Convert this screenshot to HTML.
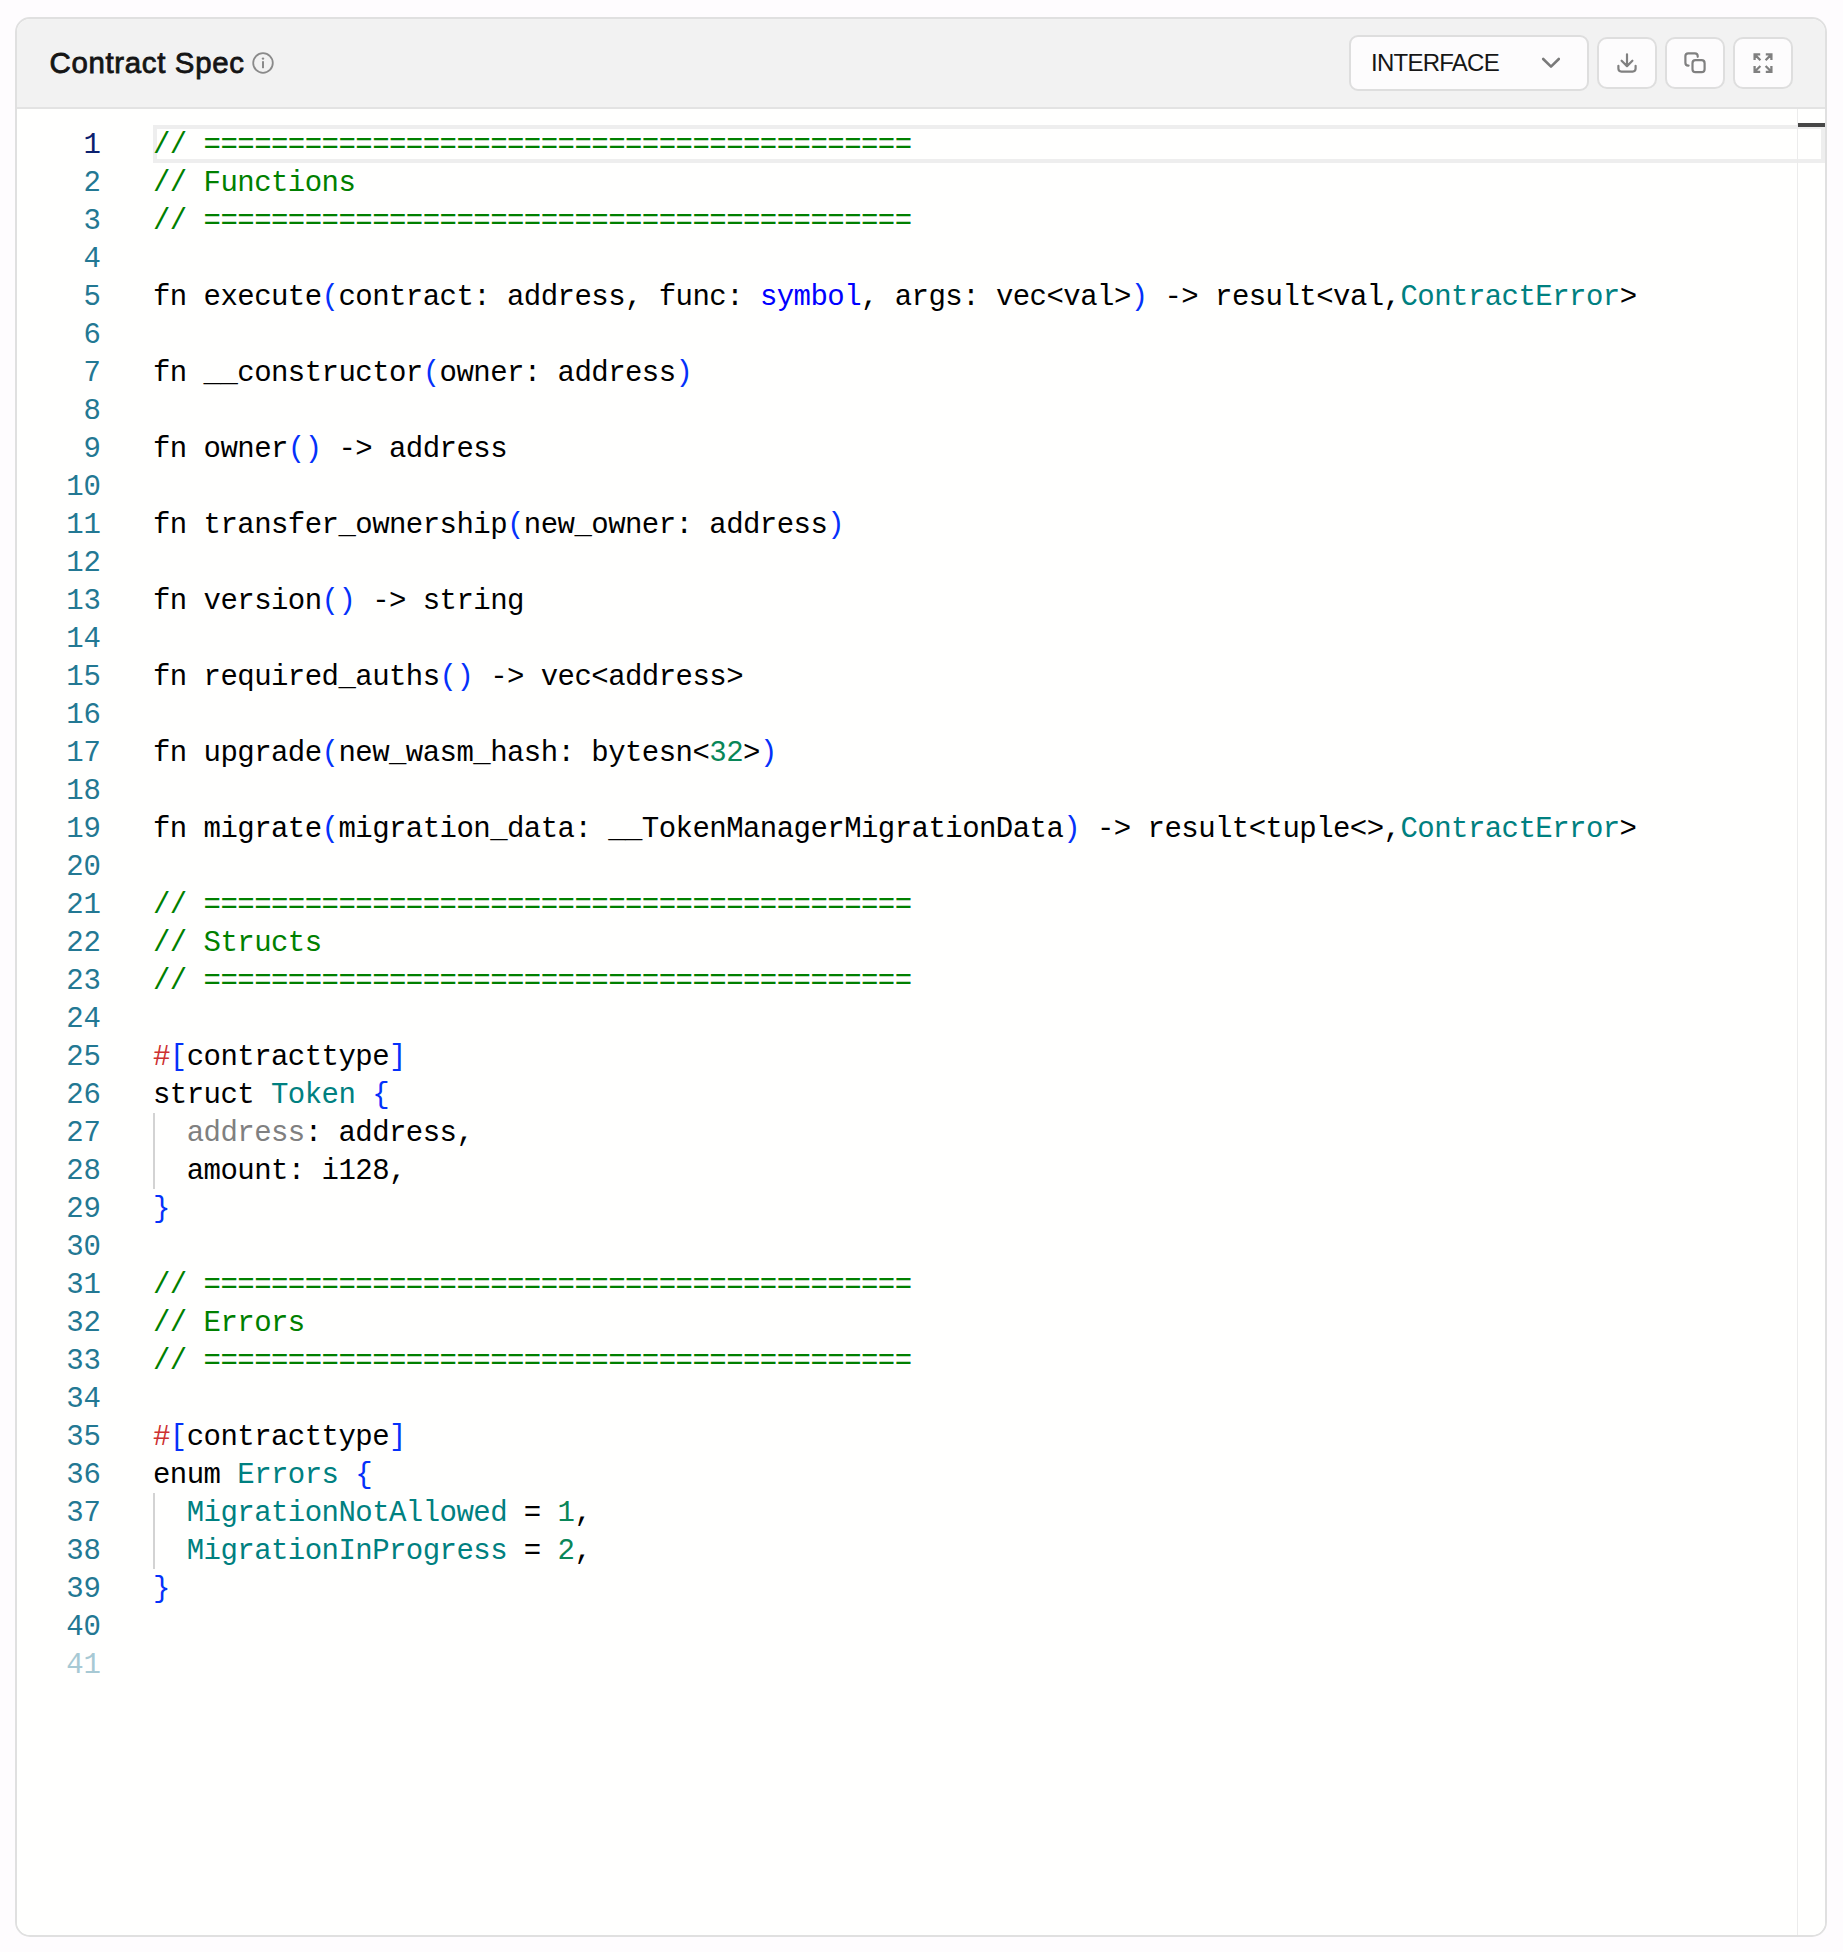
<!DOCTYPE html>
<html><head><meta charset="utf-8">
<style>
html,body{margin:0;padding:0;}
body{width:1843px;height:1952px;background:#fefcfe;position:relative;overflow:hidden;font-family:"Liberation Sans",sans-serif;}
.card{position:absolute;left:15px;top:17px;width:1812px;height:1920px;box-sizing:border-box;border:2px solid #e0e0e0;border-radius:15px;overflow:hidden;background:#fffffe;}
.hdr{position:absolute;left:0;top:0;width:1808px;height:88px;background:#f2f2f2;border-bottom:2px solid #e3e3e3;}
.title{position:absolute;left:32.5px;top:27px;font-family:"Liberation Sans",sans-serif;font-weight:normal;-webkit-text-stroke:0.8px #151515;font-size:29.4px;letter-spacing:0.68px;line-height:34px;color:#151515;white-space:nowrap;}
.info{position:absolute;left:235px;top:33px;}
.sel{position:absolute;left:1332px;top:16px;width:240px;height:56px;box-sizing:border-box;border:2px solid #dedede;border-radius:9px;background:#fdfcfd;}
.sel .t{position:absolute;left:20px;top:12px;font-size:24px;letter-spacing:-0.75px;line-height:28px;color:#161616;white-space:nowrap;}
.sel svg{position:absolute;left:190px;top:19px;}
.btn{position:absolute;top:18px;width:60px;height:52px;box-sizing:border-box;border:2px solid #dedede;border-radius:10px;background:#fdfcfd;}
.btn svg{position:absolute;left:0;top:0;}
.ed{position:absolute;left:0;top:90px;width:1808px;height:1826px;background:#fffffe;}
.num{position:absolute;left:0;width:101px;text-align:right;font-family:"Liberation Mono",monospace;font-size:29px;-webkit-text-stroke-width:0px;line-height:38px;height:38px;color:#237893;white-space:pre;}
.num.act{color:#0b216f;}
.num.dim{color:#a7c9d4;}
.ln{position:absolute;left:153px;font-family:"Liberation Mono",monospace;font-size:29px;letter-spacing:-0.5458px;-webkit-text-stroke-width:0px;line-height:38px;height:38px;color:#000;white-space:pre;}
.curline{position:absolute;left:153px;top:125px;width:1672px;height:38px;box-sizing:border-box;border:4px solid #eeeeee;}
.guide{position:absolute;left:153px;width:2px;background:#d3d3d3;}
.ruler{position:absolute;left:1797px;top:109px;width:1px;height:1826px;background:#ececec;}
.rcur{position:absolute;left:1798px;top:123px;width:27px;height:4px;background:#474747;}
</style></head><body>
<div class="card">
  <div class="hdr">
    <div class="title">Contract Spec</div>
    <svg class="info" width="22" height="22" viewBox="0 0 22 22"><circle cx="11" cy="11" r="9.8" fill="none" stroke="#8a8a8a" stroke-width="1.8"/><rect x="10" y="9.2" width="2" height="7" fill="#8a8a8a"/><circle cx="11" cy="6.6" r="1.2" fill="#8a8a8a"/></svg>
    <div class="sel"><div class="t">INTERFACE</div>
      <svg width="24" height="16" viewBox="0 0 24 16"><path d="M2.2 3 L10 10.6 L17.8 3" fill="none" stroke="#7a7a7a" stroke-width="2.6" stroke-linecap="round" stroke-linejoin="round"/></svg>
    </div>
    <div class="btn" style="left:1580px"><svg width="56" height="48" viewBox="0 0 56 48"><path d="M28 15.3 V27 M22.6 21.7 L28 27.1 L33.4 21.7 M19.4 26.8 V29.6 Q19.4 32.6 22.4 32.6 H33.6 Q36.6 32.6 36.6 29.6 V26.8" fill="none" stroke="#808080" stroke-width="2.2" stroke-linecap="round" stroke-linejoin="round"/></svg></div>
    <div class="btn" style="left:1648px"><svg width="56" height="48" viewBox="0 0 56 48"><path d="M21.6 26.6 H21.2 Q18.4 26.6 18.4 23.8 V17.1 Q18.4 14.3 21.2 14.3 H27.9 Q30.7 14.3 30.7 17.1 V17.8" fill="none" stroke="#808080" stroke-width="2.2" stroke-linecap="round" stroke-linejoin="round"/><rect x="25.5" y="21.2" width="12.1" height="12" rx="3" fill="none" stroke="#808080" stroke-width="2.2"/></svg></div>
    <div class="btn" style="left:1716px"><svg width="56" height="48" viewBox="0 0 56 48"><path d="M19.6 21 V15.4 H25.2 M19.6 15.4 L25.4 21.2 M36.4 21 V15.4 H30.8 M36.4 15.4 L30.6 21.2 M19.6 27 V32.8 H25.2 M19.6 32.8 L25.4 27 M36.4 27 V32.8 H30.8 M36.4 32.8 L30.6 27" fill="none" stroke="#808080" stroke-width="2.3" stroke-linecap="butt" stroke-linejoin="miter"/></svg></div>
  </div>
  <div class="ed"></div>
</div>
<div class="curline"></div>
<div class="guide" style="top:1113px;height:76px"></div>
<div class="guide" style="top:1493px;height:76px"></div>
<div class="ruler"></div>
<div class="rcur"></div>
<div class="num act" style="top:127px">1</div>
<div class="num" style="top:165px">2</div>
<div class="num" style="top:203px">3</div>
<div class="num" style="top:241px">4</div>
<div class="num" style="top:279px">5</div>
<div class="num" style="top:317px">6</div>
<div class="num" style="top:355px">7</div>
<div class="num" style="top:393px">8</div>
<div class="num" style="top:431px">9</div>
<div class="num" style="top:469px">10</div>
<div class="num" style="top:507px">11</div>
<div class="num" style="top:545px">12</div>
<div class="num" style="top:583px">13</div>
<div class="num" style="top:621px">14</div>
<div class="num" style="top:659px">15</div>
<div class="num" style="top:697px">16</div>
<div class="num" style="top:735px">17</div>
<div class="num" style="top:773px">18</div>
<div class="num" style="top:811px">19</div>
<div class="num" style="top:849px">20</div>
<div class="num" style="top:887px">21</div>
<div class="num" style="top:925px">22</div>
<div class="num" style="top:963px">23</div>
<div class="num" style="top:1001px">24</div>
<div class="num" style="top:1039px">25</div>
<div class="num" style="top:1077px">26</div>
<div class="num" style="top:1115px">27</div>
<div class="num" style="top:1153px">28</div>
<div class="num" style="top:1191px">29</div>
<div class="num" style="top:1229px">30</div>
<div class="num" style="top:1267px">31</div>
<div class="num" style="top:1305px">32</div>
<div class="num" style="top:1343px">33</div>
<div class="num" style="top:1381px">34</div>
<div class="num" style="top:1419px">35</div>
<div class="num" style="top:1457px">36</div>
<div class="num" style="top:1495px">37</div>
<div class="num" style="top:1533px">38</div>
<div class="num" style="top:1571px">39</div>
<div class="num" style="top:1609px">40</div>
<div class="num dim" style="top:1647px">41</div>
<div class="ln" style="top:127px"><span style="color:#008000">// ==========================================</span></div>
<div class="ln" style="top:165px"><span style="color:#008000">// Functions</span></div>
<div class="ln" style="top:203px"><span style="color:#008000">// ==========================================</span></div>
<div class="ln" style="top:241px"></div>
<div class="ln" style="top:279px">fn execute<span style="color:#0431fa">(</span>contract: address, func: <span style="color:#0000ff">symbol</span>, args: vec&lt;val&gt;<span style="color:#0431fa">)</span> -&gt; result&lt;val,<span style="color:#008080">ContractError</span>&gt;</div>
<div class="ln" style="top:317px"></div>
<div class="ln" style="top:355px">fn __constructor<span style="color:#0431fa">(</span>owner: address<span style="color:#0431fa">)</span></div>
<div class="ln" style="top:393px"></div>
<div class="ln" style="top:431px">fn owner<span style="color:#0431fa">()</span> -&gt; address</div>
<div class="ln" style="top:469px"></div>
<div class="ln" style="top:507px">fn transfer_ownership<span style="color:#0431fa">(</span>new_owner: address<span style="color:#0431fa">)</span></div>
<div class="ln" style="top:545px"></div>
<div class="ln" style="top:583px">fn version<span style="color:#0431fa">()</span> -&gt; string</div>
<div class="ln" style="top:621px"></div>
<div class="ln" style="top:659px">fn required_auths<span style="color:#0431fa">()</span> -&gt; vec&lt;address&gt;</div>
<div class="ln" style="top:697px"></div>
<div class="ln" style="top:735px">fn upgrade<span style="color:#0431fa">(</span>new_wasm_hash: bytesn&lt;<span style="color:#098658">32</span>&gt;<span style="color:#0431fa">)</span></div>
<div class="ln" style="top:773px"></div>
<div class="ln" style="top:811px">fn migrate<span style="color:#0431fa">(</span>migration_data: __TokenManagerMigrationData<span style="color:#0431fa">)</span> -&gt; result&lt;tuple&lt;&gt;,<span style="color:#008080">ContractError</span>&gt;</div>
<div class="ln" style="top:849px"></div>
<div class="ln" style="top:887px"><span style="color:#008000">// ==========================================</span></div>
<div class="ln" style="top:925px"><span style="color:#008000">// Structs</span></div>
<div class="ln" style="top:963px"><span style="color:#008000">// ==========================================</span></div>
<div class="ln" style="top:1001px"></div>
<div class="ln" style="top:1039px"><span style="color:#cd3131">#</span><span style="color:#0431fa">[</span>contracttype<span style="color:#0431fa">]</span></div>
<div class="ln" style="top:1077px">struct <span style="color:#008080">Token</span> <span style="color:#0431fa">{</span></div>
<div class="ln" style="top:1115px">  <span style="color:#808080">address</span>: address,</div>
<div class="ln" style="top:1153px">  amount: i128,</div>
<div class="ln" style="top:1191px"><span style="color:#0431fa">}</span></div>
<div class="ln" style="top:1229px"></div>
<div class="ln" style="top:1267px"><span style="color:#008000">// ==========================================</span></div>
<div class="ln" style="top:1305px"><span style="color:#008000">// Errors</span></div>
<div class="ln" style="top:1343px"><span style="color:#008000">// ==========================================</span></div>
<div class="ln" style="top:1381px"></div>
<div class="ln" style="top:1419px"><span style="color:#cd3131">#</span><span style="color:#0431fa">[</span>contracttype<span style="color:#0431fa">]</span></div>
<div class="ln" style="top:1457px">enum <span style="color:#008080">Errors</span> <span style="color:#0431fa">{</span></div>
<div class="ln" style="top:1495px">  <span style="color:#008080">MigrationNotAllowed</span> = <span style="color:#098658">1</span>,</div>
<div class="ln" style="top:1533px">  <span style="color:#008080">MigrationInProgress</span> = <span style="color:#098658">2</span>,</div>
<div class="ln" style="top:1571px"><span style="color:#0431fa">}</span></div>
<div class="ln" style="top:1609px"></div>
<div class="ln" style="top:1647px"></div>
</body></html>
